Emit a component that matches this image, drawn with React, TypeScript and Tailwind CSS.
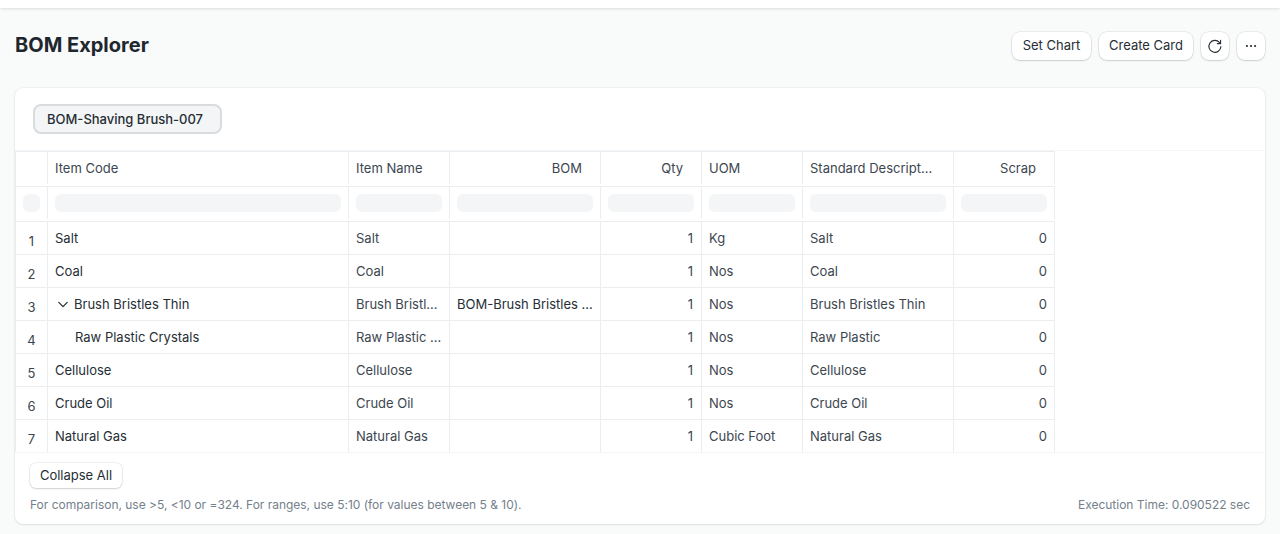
import type { ReactNode } from "react";
import { clsx } from "clsx";

interface Column {
  label: string;
  width: string;
  right?: boolean;
}

interface Item {
  code: string;
  name: string;
  bom?: string;
  uom: string;
  description: string;
  indent?: boolean;
  open?: boolean;
}

const columns: Column[] = [
  { label: "", width: "w-8" },
  { label: "Item Code", width: "w-[301px]" },
  { label: "Item Name", width: "w-[101px]" },
  { label: "BOM", width: "w-[151px]", right: true },
  { label: "Qty", width: "w-[101px]", right: true },
  { label: "UOM", width: "w-[101px]" },
  { label: "Standard Description", width: "w-[151px]" },
  { label: "Scrap", width: "w-[101px]", right: true },
];

const items: Item[] = [
  { code: "Salt", name: "Salt", uom: "Kg", description: "Salt" },
  { code: "Coal", name: "Coal", uom: "Nos", description: "Coal" },
  {
    code: "Brush Bristles Thin",
    name: "Brush Bristles Thin",
    bom: "BOM-Brush Bristles Thin-001",
    uom: "Nos",
    description: "Brush Bristles Thin",
    open: true,
  },
  {
    code: "Raw Plastic Crystals",
    name: "Raw Plastic Crystals",
    uom: "Nos",
    description: "Raw Plastic",
    indent: true,
  },
  { code: "Cellulose", name: "Cellulose", uom: "Nos", description: "Cellulose" },
  { code: "Crude Oil", name: "Crude Oil", uom: "Nos", description: "Crude Oil" },
  { code: "Natural Gas", name: "Natural Gas", uom: "Cubic Foot", description: "Natural Gas" },
];

function Button({ className, children, label }: { className: string; children: ReactNode; label?: string }) {
  return (
    <button
      aria-label={label}
      className={clsx(
        "flex shrink-0 items-center justify-center whitespace-nowrap bg-white text-[#262e35] shadow-[0_0_0_0.5px_rgba(0,0,0,0.12),0_1px_2px_rgba(0,0,0,0.13)]",
        className,
      )}
    >
      {children}
    </button>
  );
}

function RefreshIcon() {
  return (
    <svg width="16" height="16" viewBox="0 0 16 16" fill="none" stroke="#262e35" strokeWidth="1.1" strokeLinecap="round" strokeLinejoin="round">
      <path d="M13.9 8.6A6 6 0 1 1 12.4 4.4L13.5 5.5" />
      <path d="M13.6 2.4v3.2h-3.2" />
    </svg>
  );
}

function DotsIcon() {
  return (
    <svg width="14" height="14" viewBox="0 0 14 14" fill="#262e35">
      <circle cx="2.9" cy="7" r="1.1" />
      <circle cx="7" cy="7" r="1.1" />
      <circle cx="11.1" cy="7" r="1.1" />
    </svg>
  );
}

function Cell({ width, className, children }: { width: string; className?: string; children?: ReactNode }) {
  return (
    <div className={clsx("h-8 shrink-0 border-r border-[#ebeef0] px-[7px] leading-8", width, className)}>
      {children}
    </div>
  );
}

function HeaderRow() {
  return (
    <div className="flex h-[35px] border-t border-[#ebeef0]">
      {columns.map((c) => (
        <Cell
          key={c.label}
          width={c.width}
          className={clsx("truncate leading-[33px]!", c.right && "pr-[18px]! text-right", c.label === "Standard Description" && "pr-[20px]!")}
        >
          {c.label}
        </Cell>
      ))}
    </div>
  );
}

function FilterRow() {
  return (
    <div className="flex h-[35px] border-t border-[#ebeef0]">
      {columns.map((c) => (
        <Cell key={c.label} width={c.width} className="pt-[7px]">
          <div className="h-[18px] rounded-md bg-[#f4f5f6]" />
        </Cell>
      ))}
    </div>
  );
}

function ItemRow({ item, index }: { item: Item; index: number }) {
  return (
    <div className={clsx("flex", index < items.length - 1 && "border-b border-[#ebeef0]")}>
      <Cell width="w-8" className="pt-[3px] text-center">
        {index + 1}
      </Cell>
      <Cell width="w-[301px]" className={clsx("flex items-center text-[#262e35]", item.indent && "pl-[27px]!")}>
        {item.open && (
          <svg className="mr-[3px]" width="16" height="16" viewBox="0 0 16 16" fill="none" stroke="#262e35" strokeWidth="1.25" strokeLinecap="round" strokeLinejoin="round">
            <path d="M3.8 6.4 8 10.6l4.2-4.2" />
          </svg>
        )}
        <span>{item.code}</span>
      </Cell>
      <Cell width="w-[101px]" className="truncate">{item.name}</Cell>
      <Cell width="w-[151px]" className="truncate text-[#262e35]">{item.bom}</Cell>
      <Cell width="w-[101px]" className="pr-2! text-right">1</Cell>
      <Cell width="w-[101px]">{item.uom}</Cell>
      <Cell width="w-[151px]" className="truncate">{item.description}</Cell>
      <Cell width="w-[101px]" className="text-right">0</Cell>
    </div>
  );
}

export default function App() {
  return (
    <div className="flex h-[534px] w-[1280px] flex-col overflow-hidden bg-[#f9fafa] font-['Inter',sans-serif] text-[13px] text-[#3c464f]">
      <nav className="h-2 shrink-0 bg-white shadow-[0_1px_3px_rgba(0,0,0,0.12)]" />
      <header className="flex h-20 shrink-0 items-center justify-between pr-[15px] pb-[5px] pl-[15px]">
        <h1 className="pb-[2px] text-[20px] leading-[30px] font-bold text-[#1f272e]">BOM Explorer</h1>
        <div className="flex gap-2 pt-px">
          <Button className="h-7 w-[79px] rounded-lg">Set Chart</Button>
          <Button className="h-7 w-[94px] rounded-lg">Create Card</Button>
          <Button className="h-7 w-7 rounded-lg" label="Refresh"><RefreshIcon /></Button>
          <Button className="h-7 w-7 rounded-lg" label="Menu"><DotsIcon /></Button>
        </div>
      </header>
      <main className="mx-[15px] flex h-[436px] shrink-0 flex-col rounded-lg bg-white shadow-[0_0_2px_rgba(0,0,0,0.12),0_1px_2px_rgba(0,0,0,0.08)]">
        <div className="h-[63px] shrink-0 border-b border-[#f4f5f6] pt-4 pl-[18px]">
          <div className="flex h-[30px] w-[189px] items-center rounded-lg border-2 border-[#d9dbdd] bg-[#f4f5f6] pt-px pl-3 font-medium text-[#262e35]">
            BOM-Shaving Brush-007
          </div>
        </div>
        <div className="h-[302px] shrink-0 border-b border-[#f4f5f6]">
          <div className="w-[1040px] border-l border-[#ebeef0]">
            <HeaderRow />
            <FilterRow />
            <div className="border-t border-[#ebeef0]">
              {items.map((item, i) => (
                <ItemRow key={item.code} item={item} index={i} />
              ))}
            </div>
          </div>
        </div>
        <footer className="px-[15px] pt-[10px]">
          <Button className="h-[25px] w-[92px] rounded-md">Collapse All</Button>
          <div className="mt-[8px] flex justify-between text-[12px] leading-[18px] tracking-[-0.015px] text-[#74808b]">
            <span>For comparison, use &gt;5, &lt;10 or =324. For ranges, use 5:10 (for values between 5 &amp; 10).</span>
            <span>Execution Time: 0.090522 sec</span>
          </div>
        </footer>
      </main>
    </div>
  );
}
